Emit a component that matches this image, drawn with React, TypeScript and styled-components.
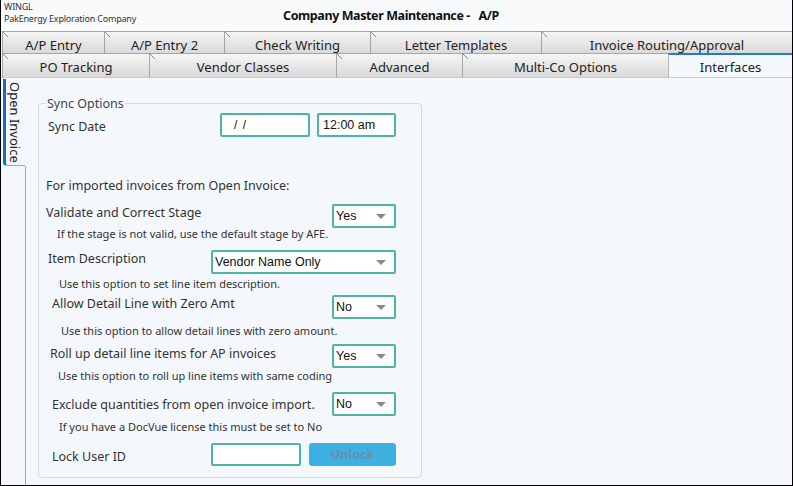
import React from 'react'
import styled, { createGlobalStyle, css } from 'styled-components'

const GlobalStyle = createGlobalStyle`
  html, body {
    margin: 0;
    padding: 0;
    background: #ffffff;
  }
  * {
    box-sizing: border-box;
  }
`

const FONT = `"Noto Sans", "Open Sans", sans-serif`

const Window = styled.div`
  width: 793px;
  height: 486px;
  display: flex;
  flex-direction: column;
  border-left: 1px solid #000;
  border-right: 1px solid #000;
  border-bottom: 1px solid #000;
  background: #f4f8fc;
  font-family: ${FONT};
  overflow: hidden;
`

const Header = styled.div`
  height: 31px;
  display: flex;
  align-items: center;
  background: #f8fafc;
`

const Company = styled.div`
  padding-left: 3px;
  padding-bottom: 5px;
  font-size: 9px;
  line-height: 12px;
  color: #333;
  letter-spacing: -0.2px;
  width: 240px;
`

const Title = styled.div`
  flex: 1;
  font-size: 12.5px;
  letter-spacing: -0.4px;
  font-weight: 700;
  color: #111;
  padding-left: 42px;
  padding-bottom: 1px;
  white-space: pre;
`

const TabRow = styled.div<{ $height: number }>`
  display: flex;
  height: ${(p) => p.$height}px;
  padding-left: 1px;
`

const Tab = styled.div<{ $width: number; $active?: boolean; $top?: boolean }>`
  position: relative;
  width: ${(p) => p.$width}px;
  flex: none;
  display: flex;
  justify-content: center;
  align-items: flex-end;
  font-size: 13px;
  line-height: 16px;
  color: #222;
  border: 1px solid #a6a6a6;
  border-bottom: none;
  border-right: none;
  background: linear-gradient(#f6f6f6, #e4e4e4 60%, #d9d9d9);
  padding-bottom: ${(p) => (p.$top ? 0 : 2)}px;

  &::before {
    content: '';
    position: absolute;
    left: -1px;
    top: -1px;
    width: 6px;
    height: 6px;
    background: linear-gradient(
      to top right,
      transparent 42%,
      #8a8a8a 42%,
      #8a8a8a 58%,
      transparent 58%
    );
  }

  ${(p) =>
    p.$active &&
    css`
      background: #f4f8fc;
      border-top: 2px solid #1f7bd1;
      border-left-color: #b5b5b5;
      &::before {
        display: none;
      }
    `}
`

const Body = styled.div`
  flex: 1;
  display: flex;
  border-top: 1px solid #c9c9c9;
`

const SideColumn = styled.div`
  width: 25px;
  display: flex;
  flex-direction: column;
  padding-top: 1px;
`

const SideTab = styled.div`
  margin-left: 2px;
  height: 87px;
  width: 22px;
  writing-mode: vertical-rl;
  font-size: 13px;
  line-height: 20px;
  color: #222;
  padding-top: 3px;
  border-left: 3px solid #1769c4;
  border-bottom-left-radius: 4px;
  border-bottom: 1px solid #a6a6a6;
`

const SideFill = styled.div`
  flex: 1;
  border-right: 1px solid #a6a6a6;
`

const Pane = styled.div`
  flex: 1;
  padding: 17px 0 0 12px;
`

const Group = styled.fieldset`
  width: 384px;
  height: 383px;
  margin: 0;
  padding: 0 25px 0 7px;
  border: 1px solid #d4dae0;
  border-radius: 4px;
  display: flex;
  flex-direction: column;
`

const Legend = styled.legend`
  margin-left: 0;
  padding: 0 1px;
  font-size: 12.5px;
  line-height: 17px;
  color: #444;
`

const Row = styled.div<{ $gap: number }>`
  display: flex;
  align-items: flex-start;
  margin-top: ${(p) => p.$gap}px;
  gap: 7px;
`

const Label = styled.div<{ $indent: number; $drop?: number }>`
  flex: 1;
  padding-left: ${(p) => p.$indent}px;
  padding-top: ${(p) => p.$drop ?? 0}px;
  font-size: 12.5px;
  line-height: 17px;
  color: #333;
  white-space: nowrap;
`

const Intro = styled.div<{ $gap: number }>`
  margin-top: ${(p) => p.$gap}px;
  font-size: 12.5px;
  line-height: 17px;
  color: #333;
  white-space: nowrap;
`

const Note = styled.div<{ $gap: number; $indent: number }>`
  margin-top: ${(p) => p.$gap}px;
  padding-left: ${(p) => p.$indent}px;
  font-size: 11px;
  line-height: 14px;
  color: #333;
  white-space: nowrap;
`

const Field = styled.div<{ $width: number; $height?: number }>`
  width: ${(p) => p.$width}px;
  height: ${(p) => p.$height ?? 24}px;
  flex: none;
  display: flex;
  align-items: center;
  padding: 0 4px;
  background: #fff;
  border: 2px solid #4db3ab;
  border-radius: 2px;
  font-family: "Liberation Sans", Arial, sans-serif;
  font-size: 12.5px;
  color: #111;
`

const DateText = styled.span`
  padding-left: 8px;
  font-size: 12px;
  letter-spacing: 1px;
`

const Select = styled(Field)`
  padding-left: 2px;
  justify-content: space-between;
`

const Caret = styled.span`
  width: 0;
  height: 0;
  margin-right: 4px;
  border-left: 5px solid transparent;
  border-right: 5px solid transparent;
  border-top: 5px solid #8a8a8a;
`

const Controls = styled.div<{ $gap: number }>`
  display: flex;
  gap: ${(p) => p.$gap}px;
  flex: none;
`

const UnlockButton = styled.button`
  width: 87px;
  height: 23px;
  border: none;
  border-radius: 3px;
  background: #3fb0e2;
  color: #6a8fae;
  font-family: ${FONT};
  font-size: 12.5px;
  font-weight: 700;
  padding: 0;
`

const topTabs = [
  { label: 'A/P Entry', width: 102 },
  { label: 'A/P Entry 2', width: 120 },
  { label: 'Check Writing', width: 146 },
  { label: 'Letter Templates', width: 171 },
  { label: 'Invoice Routing/Approval', width: 251 },
]

const bottomTabs = [
  { label: 'PO Tracking', width: 147 },
  { label: 'Vendor Classes', width: 187 },
  { label: 'Advanced', width: 126 },
  { label: 'Multi-Co Options', width: 206 },
  { label: 'Interfaces', width: 124, active: true },
]

const DropDown: React.FC<{ value: string; width: number }> = ({ value, width }) => (
  <Select $width={width}>
    <span>{value}</span>
    <Caret />
  </Select>
)

export default function App() {
  return (
    <>
      <GlobalStyle />
      <Window>
        <Header>
          <Company>
            WINGL
            <br />
            PakEnergy Exploration Company
          </Company>
          <Title>{'Company Master Maintenance -   A/P'}</Title>
        </Header>

        <TabRow $height={22}>
          {topTabs.map((t) => (
            <Tab key={t.label} $width={t.width} $top>
              <span>{t.label}</span>
            </Tab>
          ))}
        </TabRow>
        <TabRow $height={24}>
          {bottomTabs.map((t) => (
            <Tab key={t.label} $width={t.width} $active={t.active}>
              <span>{t.label}</span>
            </Tab>
          ))}
        </TabRow>

        <Body>
          <SideColumn>
            <SideTab>Open Invoice</SideTab>
            <SideFill />
          </SideColumn>

          <Pane>
            <Group>
              <Legend>Sync Options</Legend>

              <Row $gap={1}>
                <Label $indent={2} $drop={5}>
                  Sync Date
                </Label>
                <Controls $gap={7}>
                  <Field $width={90}>
                    <DateText>/ /</DateText>
                  </Field>
                  <Field $width={79}>12:00 am</Field>
                </Controls>
              </Row>

              <Intro $gap={40}>For imported invoices from Open Invoice:</Intro>

              <Row $gap={10}>
                <Label $indent={0}>Validate and Correct Stage</Label>
                <DropDown value="Yes" width={64} />
              </Row>
              <Note $gap={-1} $indent={11}>
                If the stage is not valid, use the default stage by AFE.
              </Note>

              <Row $gap={9}>
                <Label $indent={2}>Item Description</Label>
                <DropDown value="Vendor Name Only" width={185} />
              </Row>
              <Note $gap={3} $indent={13}>
                Use this option to set line item description.
              </Note>

              <Row $gap={4}>
                <Label $indent={6}>Allow Detail Line with Zero Amt</Label>
                <DropDown value="No" width={64} />
              </Row>
              <Note $gap={5} $indent={15}>
                Use this option to allow detail lines with zero amount.
              </Note>

              <Row $gap={6}>
                <Label $indent={4} $drop={1}>
                  Roll up detail line items for AP invoices
                </Label>
                <DropDown value="Yes" width={64} />
              </Row>
              <Note $gap={1} $indent={12}>
                Use this option to roll up line items with same coding
              </Note>

              <Row $gap={9}>
                <Label $indent={6} $drop={4}>
                  Exclude quantities from open invoice import.
                </Label>
                <DropDown value="No" width={64} />
              </Row>
              <Note $gap={4} $indent={13}>
                If you have a DocVue license this must be set to No
              </Note>

              <Row $gap={9}>
                <Label $indent={6} $drop={5}>
                  Lock User ID
                </Label>
                <Controls $gap={8}>
                  <Field $width={90} $height={23} />
                  <UnlockButton type="button">Unlock</UnlockButton>
                </Controls>
              </Row>
            </Group>
          </Pane>
        </Body>
      </Window>
    </>
  )
}
